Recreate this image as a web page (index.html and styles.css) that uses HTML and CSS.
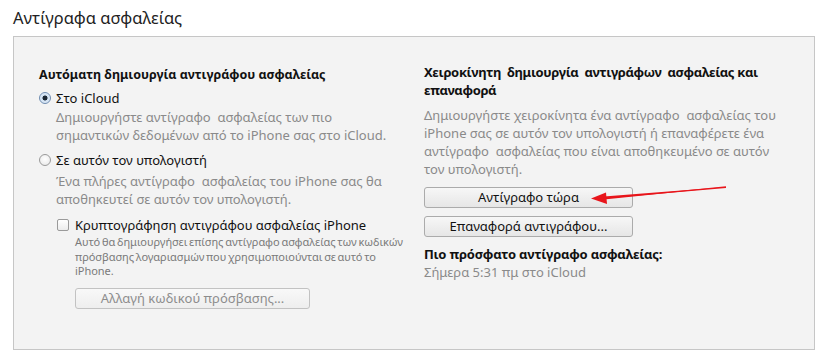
FILE: index.html
```html
<!DOCTYPE html>
<html lang="el">
<head>
<meta charset="utf-8">
<link rel="stylesheet" href="styles.css">
</head>
<body>
<h1 class="title">Αντίγραφα ασφαλείας</h1>
<div class="panel">
  <div class="col left">
    <div class="heading h-left">Αυτόματη δημιουργία αντιγράφου ασφαλείας</div>
    <div class="option first">
      <span class="radio checked"></span><span class="label">Στο iCloud</span>
    </div>
    <div class="desc indent">Δημιουργήστε αντίγραφο&nbsp; ασφαλείας των πιο<br>σημαντικών δεδομένων από το iPhone σας στο iCloud.</div>
    <div class="option second">
      <span class="radio"></span><span class="label">Σε αυτόν τον υπολογιστή</span>
    </div>
    <div class="desc indent d2">Ένα πλήρες αντίγραφο&nbsp; ασφαλείας του iPhone σας θα<br>αποθηκευτεί σε αυτόν τον υπολογιστή.</div>
    <div class="sub">
      <div class="option check-row">
        <span class="checkbox"></span><span class="label">Κρυπτογράφηση αντιγράφου ασφαλείας iPhone</span>
      </div>
      <div class="sub-body">
        <div class="small">Αυτό θα δημιουργήσει επίσης αντίγραφο ασφαλείας των κωδικών<br>πρόσβασης λογαριασμών που χρησιμοποιούνται σε αυτό το<br>iPhone.</div>
        <button class="btn disabled wide">Αλλαγή κωδικού πρόσβασης...</button>
      </div>
    </div>
  </div>
  <div class="col right">
    <div class="heading h-right">Χειροκίνητη&nbsp; δημιουργία&nbsp; αντιγράφων&nbsp; ασφαλείας και<br>επαναφορά</div>
    <div class="desc r">Δημιουργήστε χειροκίνητα ένα αντίγραφο&nbsp; ασφαλείας του<br>iPhone σας σε αυτόν τον υπολογιστή ή επαναφέρετε ένα<br>αντίγραφο&nbsp; ασφαλείας που είναι αποθηκευμένο σε αυτόν<br>τον υπολογιστή.</div>
    <button class="btn b1">Αντίγραφο τώρα</button>
    <button class="btn b2">Επαναφορά αντιγράφου...</button>
    <div class="latest">Πιο πρόσφατο αντίγραφο ασφαλείας:</div>
    <div class="desc">Σήμερα 5:31 πμ στο iCloud</div>
  </div>
  <svg class="arrow" width="150" height="30" viewBox="0 0 150 30">
    <path d="M140 3 L18 12.5 L18 15.5 Z" fill="#e8151b"/>
    <path d="M140 2.2 L140 4 L18 14.5 Z" fill="#e8151b"/>
    <path d="M5 14.5 L20 8.5 L21 20 Z" fill="#e8151b"/>
  </svg>
</div>
</body>
</html>
```
FILE: styles.css
```css
html, body {
  margin: 0;
  padding: 0;
  background: #ffffff;
}
body {
  font-family: "Noto Sans", "Open Sans", sans-serif;
  color: #1a1a1a;
  width: 826px;
  height: 362px;
  overflow: hidden;
}
.title {
  margin: 0;
  padding: 6px 0 0 13px;
  font-size: 16.5px;
  font-weight: normal;
  line-height: 24px;
  color: #222;
}
.panel {
  position: relative;
  margin: 6px 11px 0 13px;
  height: 314px;
  border: 1px solid #c6c6c6;
  background: #f3f3f3;
  display: grid;
  grid-template-columns: 385px 1fr;
  padding-left: 25px;
  box-sizing: border-box;
}
.col {
  display: flex;
  flex-direction: column;
  align-items: flex-start;
}
.left { padding-top: 29px; }
.right { padding-top: 26px; }
.heading {
  font-size: 13px;
  font-weight: bold;
  line-height: 18px;
  color: #111;
  white-space: nowrap;
}
.h-left {
  font-size: 12.5px;
  letter-spacing: 0px;
}
.h-right {
  letter-spacing: -0.35px;
}
.option {
  display: flex;
  align-items: center;
  font-size: 13px;
  line-height: 18px;
  color: #111;
}
.option.first { margin-top: 5px; }
.option.second { margin-top: 7px; }
.radio {
  width: 12px;
  height: 12px;
  border: 1px solid #9a9a9a;
  border-radius: 50%;
  background: radial-gradient(circle at 50% 40%, #ffffff 0%, #e6e6e6 100%);
  box-sizing: border-box;
  margin-right: 5px;
}
.radio.checked {
  border-color: #6f8cb0;
  background: radial-gradient(circle, #1c2733 0 2.2px, #cfe0f2 2.8px, #eaf2fb 100%);
}
.label { white-space: nowrap; }
.desc {
  font-size: 13px;
  line-height: 18px;
  color: #8a8a8a;
  white-space: nowrap;
}
.indent { margin-left: 17px; margin-top: 1px; }
.indent.d2 { margin-top: 3px; }
.sub {
  margin-left: 18px;
  margin-top: 8px;
  display: flex;
  flex-direction: column;
  align-items: flex-start;
}
.sub-body {
  margin-left: 18px;
  display: flex;
  flex-direction: column;
  align-items: flex-start;
}
.checkbox {
  width: 12px;
  height: 12px;
  border: 1px solid #9a9a9a;
  border-radius: 2px;
  background: linear-gradient(#ffffff, #ececec);
  box-sizing: border-box;
  margin-right: 6px;
}
.small {
  font-size: 11px;
  line-height: 14.5px;
  color: #7a7a7a;
  margin-top: 1px;
  white-space: nowrap;
  letter-spacing: -0.05px;
  word-spacing: -1px;
}
.btn {
  font-family: inherit;
  font-size: 13px;
  line-height: 17px;
  height: 21px;
  padding: 0;
  border: 1px solid #ababab;
  border-radius: 3px;
  background: linear-gradient(#f7f7f7, #e6e6e6);
  color: #111;
  width: 209px;
  box-sizing: border-box;
}
.btn.wide { width: 235px; margin-top: 9px; }
.btn.disabled { color: #8d8d8d; border-color: #c2c2c2; background: linear-gradient(#f8f8f8, #eeeeee); }
.desc.r { margin-top: 7px; }
.b1 { margin-top: 9px; }
.b2 { margin-top: 8px; }
.latest {
  font-size: 13px;
  font-weight: bold;
  line-height: 18px;
  color: #111;
  margin-top: 8px;
  letter-spacing: -0.2px;
}
.arrow {
  position: absolute;
  left: 572px;
  top: 147px;
}
```
